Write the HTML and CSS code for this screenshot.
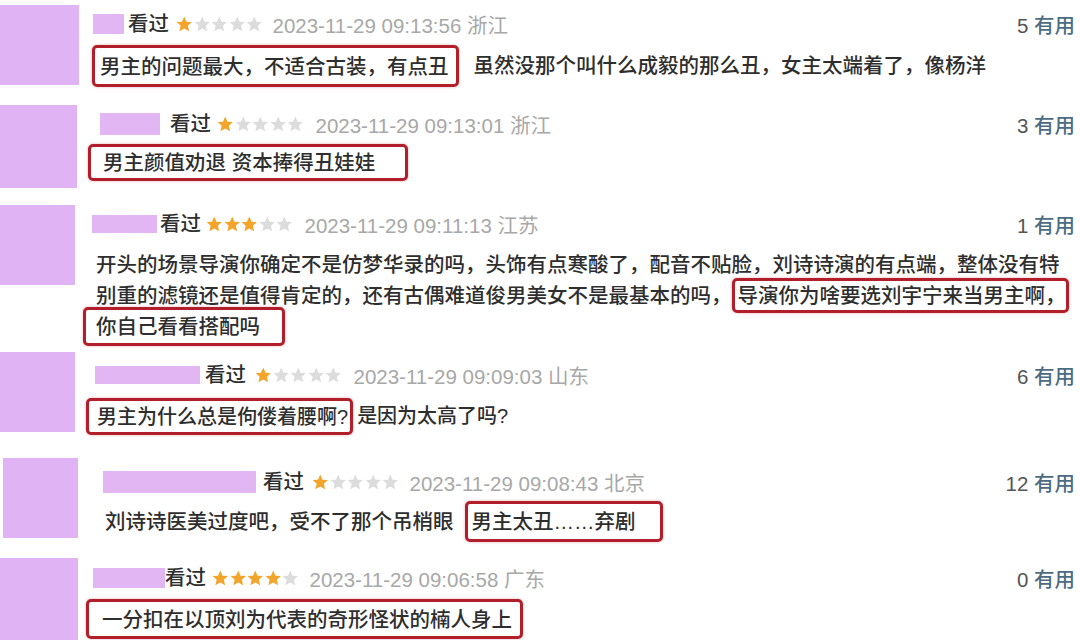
FILE: index.html
```html
<!DOCTYPE html>
<html lang="zh-CN">
<head>
<meta charset="utf-8">
<title>短评</title>
<link rel="stylesheet" href="styles.css">
</head>
<body>
<svg class="defs" width="0" height="0" aria-hidden="true">
  <symbol id="star" viewBox="0 0 16 16">
    <polygon points="8,0.6 10.2,5.5 15.4,5.9 11.5,9.4 12.7,14.7 8,12 3.3,14.7 4.5,9.4 0.6,5.9 5.8,5.5"/>
  </symbol>
</svg>
<div class="list">
  <div class="row row-1">
    <div class="avatar"></div>
    <div class="main">
      <div class="head">
        <span class="name"></span>
        <span class="seen">看过</span>
        <span class="stars">
          <svg class="star on"><use href="#star"/></svg><svg class="star"><use href="#star"/></svg><svg class="star"><use href="#star"/></svg><svg class="star"><use href="#star"/></svg><svg class="star"><use href="#star"/></svg>
        </span>
        <span class="date">2023-11-29 09:13:56 浙江</span>
        <span class="vote"><span class="num">5</span> 有用</span>
      </div>
      <p class="text"><span class="hl">男主的问题最大，不适合古装，有点丑</span>虽然没那个叫什么成毅的那么丑，女主太端着了，像杨洋</p>
    </div>
  </div>

  <div class="row row-2">
    <div class="avatar"></div>
    <div class="main">
      <div class="head">
        <span class="name"></span>
        <span class="seen">看过</span>
        <span class="stars">
          <svg class="star on"><use href="#star"/></svg><svg class="star"><use href="#star"/></svg><svg class="star"><use href="#star"/></svg><svg class="star"><use href="#star"/></svg><svg class="star"><use href="#star"/></svg>
        </span>
        <span class="date">2023-11-29 09:13:01 浙江</span>
        <span class="vote"><span class="num">3</span> 有用</span>
      </div>
      <p class="text"><span class="hl">男主颜值劝退 资本捧得丑娃娃</span></p>
    </div>
  </div>

  <div class="row row-3">
    <div class="avatar"></div>
    <div class="main">
      <div class="head">
        <span class="name"></span>
        <span class="seen">看过</span>
        <span class="stars">
          <svg class="star on"><use href="#star"/></svg><svg class="star on"><use href="#star"/></svg><svg class="star on"><use href="#star"/></svg><svg class="star"><use href="#star"/></svg><svg class="star"><use href="#star"/></svg>
        </span>
        <span class="date">2023-11-29 09:11:13 江苏</span>
        <span class="vote"><span class="num">1</span> 有用</span>
      </div>
      <p class="text">开头的场景导演你确定不是仿梦华录的吗，头饰有点寒酸了，配音不贴脸，刘诗诗演的有点端，整体没有特<br>别重的滤镜还是值得肯定的，还有古偶难道俊男美女不是最基本的吗，<span class="hl hl-mid">导演你为啥要选刘宇宁来当男主啊，</span><br><span class="hl hl-last">你自己看看搭配吗</span></p>
    </div>
  </div>

  <div class="row row-4">
    <div class="avatar"></div>
    <div class="main">
      <div class="head">
        <span class="name"></span>
        <span class="seen">看过</span>
        <span class="stars">
          <svg class="star on"><use href="#star"/></svg><svg class="star"><use href="#star"/></svg><svg class="star"><use href="#star"/></svg><svg class="star"><use href="#star"/></svg><svg class="star"><use href="#star"/></svg>
        </span>
        <span class="date">2023-11-29 09:09:03 山东</span>
        <span class="vote"><span class="num">6</span> 有用</span>
      </div>
      <p class="text"><span class="hl">男主为什么总是佝偻着腰啊?</span>是因为太高了吗?</p>
    </div>
  </div>

  <div class="row row-5">
    <div class="avatar"></div>
    <div class="main">
      <div class="head">
        <span class="name"></span>
        <span class="seen">看过</span>
        <span class="stars">
          <svg class="star on"><use href="#star"/></svg><svg class="star"><use href="#star"/></svg><svg class="star"><use href="#star"/></svg><svg class="star"><use href="#star"/></svg><svg class="star"><use href="#star"/></svg>
        </span>
        <span class="date">2023-11-29 09:08:43 北京</span>
        <span class="vote"><span class="num">12</span> 有用</span>
      </div>
      <p class="text">刘诗诗医美过度吧，受不了那个吊梢眼<span class="hl">男主太丑……弃剧</span></p>
    </div>
  </div>

  <div class="row row-6">
    <div class="avatar"></div>
    <div class="main">
      <div class="head">
        <span class="name"></span>
        <span class="seen">看过</span>
        <span class="stars">
          <svg class="star on"><use href="#star"/></svg><svg class="star on"><use href="#star"/></svg><svg class="star on"><use href="#star"/></svg><svg class="star on"><use href="#star"/></svg><svg class="star"><use href="#star"/></svg>
        </span>
        <span class="date">2023-11-29 09:06:58 广东</span>
        <span class="vote"><span class="num">0</span> 有用</span>
      </div>
      <p class="text"><span class="hl">一分扣在以顶刘为代表的奇形怪状的楠人身上</span></p>
    </div>
  </div>
</div>
</body>
</html>
```

FILE: styles.css
```css
* { box-sizing: border-box; }

html, body {
  margin: 0;
  background: #ffffff;
}

body {
  width: 1080px;
  height: 640px;
  overflow: hidden;
  font-family: "Liberation Sans", "Noto Sans CJK SC", sans-serif;
  font-size: 20.5px;
  color: #2e2e2e;
}

.defs { position: absolute; width: 0; height: 0; overflow: hidden; }

.list {
  display: flex;
  flex-direction: column;
}

.row {
  display: flex;
  align-items: flex-start;
  padding-right: 5px;
  flex: none;
}

.avatar {
  flex: none;
  background: #e0b4f4;
}

.main {
  flex: 1;
  min-width: 0;
}

.head {
  display: flex;
  align-items: center;
  height: 24px;
  white-space: nowrap;
}

.name {
  flex: none;
  background: #e1b6f3;
}

.seen {
  color: #2e2e2e;
  line-height: 24px;
  font-weight: 500;
}

.stars {
  display: flex;
  gap: 1px;
}

.star {
  width: 16.5px;
  height: 16.5px;
  display: block;
  fill: #dcdcdc;
}

.star.on { fill: #f2a52a; }

.date { color: #a8a8a8; }

.vote {
  margin-left: auto;
  color: #4d6c82;
  font-weight: 500;
}

.vote .num { color: #555555; font-weight: 400; }

.text {
  margin: 0;
  line-height: 24px;
  white-space: nowrap;
  font-weight: 500;
}

.hl {
  border: 3px solid #b21f2b;
  border-radius: 5px;
  box-shadow: 0 0 3px rgba(178, 31, 43, 0.35);
}

/* row 1 */
.row-1 { height: 100px; }
.row-1 .avatar { margin-top: 5px; width: 79px; height: 80px; }
.row-1 .main { padding-left: 21px; }
.row-1 .head { margin-top: 12px; }
.row-1 .name { margin-left: -7px; width: 31px; height: 20px; }
.row-1 .seen { margin-left: 4px; }
.row-1 .stars { margin-left: 7px; }
.row-1 .date { margin-left: 10px; }
.row-1 .text { margin-top: 18px; }
.row-1 .hl { margin-left: -8px; margin-right: 15px; padding: 6.5px 7px 6.5px 5px; }

/* row 2 */
.row-2 { height: 100px; }
.row-2 .avatar { margin-top: 5px; width: 77px; height: 83px; }
.row-2 .main { padding-left: 26px; }
.row-2 .head { margin-top: 12px; }
.row-2 .name { margin-left: -3px; width: 60px; height: 22px; }
.row-2 .seen { margin-left: 10px; }
.row-2 .stars { margin-left: 6px; }
.row-2 .date { margin-left: 12px; }
.row-2 .text { margin-top: 15px; }
.row-2 .hl { margin-left: -15px; padding: 4px 30px 4px 12px; }

/* row 3 */
.row-3 { height: 150px; }
.row-3 .avatar { margin-top: 5px; width: 75px; height: 80px; }
.row-3 .main { padding-left: 21px; }
.row-3 .head { margin-top: 12px; }
.row-3 .name { margin-left: -4px; width: 65px; height: 18px; }
.row-3 .seen { margin-left: 3px; }
.row-3 .stars { margin-left: 5px; }
.row-3 .date { margin-left: 12px; }
.row-3 .text { margin-top: 13px; line-height: 31px; }
.row-3 .hl-mid { padding: 3px 0 3px 3px; }
.row-3 .hl-last { margin-left: -13px; padding: 5px 22px 5px 10px; }

/* row 4 */
.row-4 { height: 100px; }
.row-4 .avatar { margin-top: 2px; width: 75px; height: 80px; }
.row-4 .main { padding-left: 22px; }
.row-4 .head { margin-top: 13px; }
.row-4 .name { margin-left: -2px; width: 105px; height: 18px; }
.row-4 .seen { margin-left: 5px; }
.row-4 .stars { margin-left: 9px; }
.row-4 .date { margin-left: 12px; }
.row-4 .text { margin-top: 17px; font-size: 20px; }
.row-4 .hl { margin-left: -11px; margin-right: 4px; padding: 4.5px 2px 4.5px 8px; }

/* row 5 */
.row-5 { height: 100px; }
.row-5 .avatar { margin: 8px 0 0 3px; width: 75px; height: 80px; }
.row-5 .main { padding-left: 27px; }
.row-5 .head { margin-top: 20px; }
.row-5 .name { margin-left: -2px; width: 153px; height: 22px; }
.row-5 .seen { margin-left: 7px; }
.row-5 .stars { margin-left: 8px; }
.row-5 .date { margin-left: 11px; }
.row-5 .text { margin-top: 16px; }
.row-5 .hl { margin-left: 11px; padding: 6px 24px 6px 4px; }

/* row 6 */
.row-6 { height: 90px; }
.row-6 .avatar { margin-top: 8px; width: 78px; height: 82px; }
.row-6 .main { padding-left: 24px; }
.row-6 .head { margin-top: 16px; }
.row-6 .name { margin-left: -9px; width: 72px; height: 20px; }
.row-6 .seen { margin-left: 0; }
.row-6 .stars { margin-left: 6px; }
.row-6 .date { margin-left: 11px; }
.row-6 .text { margin-top: 17px; }
.row-6 .hl { margin-left: -16px; padding: 5.5px 8px 5.5px 13px; }
```
